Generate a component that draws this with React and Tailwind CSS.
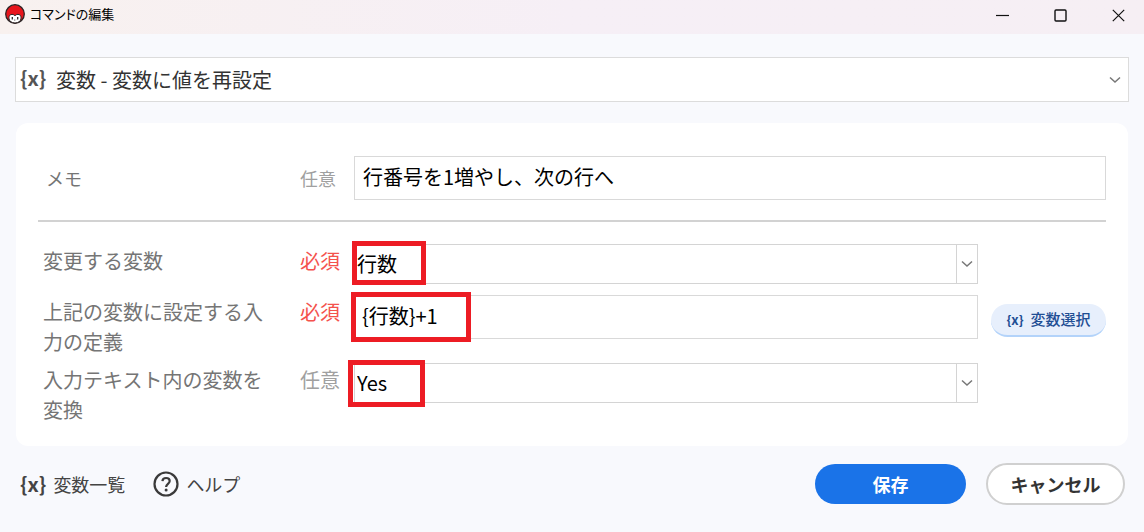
import React, { useState } from 'react';

const MascotIcon = () => (
    <svg viewBox="0 0 20 20" className="h-5 w-5 shrink-0" aria-hidden="true">
        <circle cx="10" cy="10" r="9.3" fill="#e8151c" stroke="#2b2526" strokeWidth="1.3" />
        <path d="M5 17.2C3.2 14 3.8 10.4 7 10.4c1.5 0 2.4.6 3 1.5.6-.9 1.5-1.5 3-1.5 3.2 0 3.8 3.6 2 6.8A9.2 9.2 0 0 1 10 19a9.2 9.2 0 0 1-5-1.8Z" fill="#fff" stroke="#2b2526" strokeWidth="1" />
        <path d="M7.3 13v2.6M12.7 13v2.6" fill="none" stroke="#2b2526" strokeWidth="1.3" />
        <path d="m9.4 15.8.6.6.6-.6" fill="none" stroke="#2b2526" strokeWidth=".9" />
    </svg>
);

const VariableMark = ({ className }) => (
    <span className={className}>{'{x}'}</span>
);

const Chevron = () => (
    <svg viewBox="0 0 12 8" className="h-2 w-3" fill="none" stroke="#777" strokeWidth="1.5" aria-hidden="true">
        <path d="M1 1.5 6 6l5-4.5" />
    </svg>
);

const WindowButton = ({ label, children }) => (
    <button type="button" aria-label={label} className="flex h-7 w-[46px] items-center justify-center">
        <svg viewBox="0 0 13 13" className="h-[13px] w-[13px]" fill="none" stroke="#111" strokeWidth="1.2" aria-hidden="true">
            {children}
        </svg>
    </button>
);

const TitleBar = () => (
    <header className="flex h-[34px] items-start justify-between bg-linear-to-r from-[#f8f1ef] via-[#f6eff6] to-[#f6eff4]">
        <div className="flex items-center gap-[5px] pt-1 pl-[5px]">
            <MascotIcon />
            <h1 className="text-[13px] leading-5 text-black [font-feature-settings:'palt']">コマンドの編集</h1>
        </div>
        <div className="flex gap-3 pt-px pr-[3px]">
            <WindowButton label="最小化"><path d="M0 6.5h13" /></WindowButton>
            <WindowButton label="最大化"><rect x="1" y="1" width="11" height="11" rx="1" strokeWidth="1.4" /></WindowButton>
            <WindowButton label="閉じる"><path d="m.8.8 11.4 11.4M12.2.8.8 12.2" /></WindowButton>
        </div>
    </header>
);

const Tag = ({ required }) => (
    <span className={`w-[54px] shrink-0 text-[20px] leading-[30px] ${required ? 'text-[#f4524d]' : 'text-[#a0a0a0]'}`}>
        {required ? '必須' : '任意'}
    </span>
);

const FieldRow = ({ id, label, required, aside, children }) => (
    <div className="flex items-start pl-[5px]">
        <label htmlFor={id} className="mr-[27px] w-[230px] shrink-0 pt-0.5 text-[20px] leading-[30px] text-[#757575]">{label}</label>
        <div className="flex pt-0.5"><Tag required={required} /></div>
        <div className="relative min-w-0 flex-1">{children}</div>
        <div className="w-32 shrink-0 pt-[9px] pl-[13px]">{aside}</div>
    </div>
);

const Dropdown = ({ id, value, options, onChange }) => (
    <>
        <select
            id={id}
            value={value}
            onChange={e => onChange(e.target.value)}
            className="block h-10 w-full appearance-none border border-[#d4d4d4] bg-white pl-0.5 text-[20px] text-black"
        >
            {options.map(option => <option key={option}>{option}</option>)}
        </select>
        <span className="pointer-events-none absolute inset-y-0 right-0 flex w-[22px] items-center justify-center border border-[#d4d4d4]">
            <Chevron />
        </span>
    </>
);

const Highlight = ({ className }) => (
    <span className={`pointer-events-none absolute border-[5px] border-[#ed1c24] ${className}`} />
);

const App = () => {
    const [command, setCommand] = useState('変数 - 変数に値を再設定');
    const [memo, setMemo] = useState('行番号を1増やし、次の行へ');
    const [variable, setVariable] = useState('行数');
    const [definition, setDefinition] = useState('{行数}+1');
    const [convert, setConvert] = useState('Yes');

    return (
        <div className="min-h-screen bg-[#f8f9fd] font-['Noto_Sans_CJK_JP',sans-serif]">
            <TitleBar />
            <main className="px-4 pt-[23px]">
                <div className="relative -mx-px">
                    <VariableMark className="pointer-events-none absolute top-[6px] left-[5px] text-[20px] leading-[30px] font-bold text-[#555]" />
                    <select
                        aria-label="コマンド"
                        value={command}
                        onChange={e => setCommand(e.target.value)}
                        className="block h-[45px] w-full appearance-none border border-[#dcdcdc] bg-white pl-10 text-[20px] text-[#333]"
                    >
                        <option>変数 - 変数に値を再設定</option>
                    </select>
                    <span className="pointer-events-none absolute inset-y-0 right-2 flex items-center"><Chevron /></span>
                </div>

                <section className="mt-[21px] rounded-xl bg-white px-[22px] pt-[33px] pb-[21px]">
                    <div className="flex items-center pl-2">
                        <label htmlFor="memo" className="w-[254px] shrink-0 text-[18px] text-[#757575]">メモ</label>
                        <span className="w-[54px] shrink-0 text-[18px] text-[#a0a0a0]">任意</span>
                        <input
                            id="memo"
                            value={memo}
                            onChange={e => setMemo(e.target.value)}
                            className="h-11 min-w-0 flex-1 border border-[#d9d9d9] px-2 pb-1 text-[20px] text-black"
                        />
                    </div>
                    <hr className="mt-5 mb-[22px] border-t-2 border-[#d2d2d2]" />

                    <FieldRow id="variable" label="変更する変数" required>
                        <Dropdown id="variable" value={variable} options={['行数']} onChange={setVariable} />
                        <Highlight className="-top-[3px] -left-0.5 h-11 w-[74px]" />
                    </FieldRow>
                    <div className="mt-[11px] mb-1.5">
                        <FieldRow
                            id="definition"
                            label="上記の変数に設定する入力の定義"
                            required
                            aside={(
                                <button type="button" className="flex h-[33px] w-[115px] items-center justify-center gap-[7px] rounded-full border-b-2 border-[#b3d3fa] bg-[#e7effc] text-[15px] font-medium text-[#1f4e94]">
                                    <VariableMark className="text-[13px] font-bold" />変数選択
                                </button>
                            )}
                        >
                            <input
                                id="definition"
                                value={definition}
                                onChange={e => setDefinition(e.target.value)}
                                className="block h-11 w-full border border-[#d9d9d9] px-[7px] pb-1 text-[20px] text-black"
                            />
                            <Highlight className="-top-[3px] -left-[3px] h-[50px] w-[120px]" />
                        </FieldRow>
                    </div>
                    <FieldRow id="convert" label="入力テキスト内の変数を変換">
                        <Dropdown id="convert" value={convert} options={['Yes', 'No']} onChange={setConvert} />
                        <Highlight className="-top-[3px] -left-1.5 h-[47px] w-[77px]" />
                    </FieldRow>
                </section>
            </main>

            <footer className="flex items-center justify-between pt-[17px] pr-[19px] pl-5 text-[18px] text-[#444]">
                <div className="flex items-center gap-7">
                    <button type="button" className="flex items-center gap-[7px]">
                        <VariableMark className="text-[20px] leading-[30px] font-bold" />変数一覧
                    </button>
                    <button type="button" className="flex items-center gap-[7px]">
                        <svg viewBox="0 0 26 26" className="h-[26px] w-[26px]" fill="none" stroke="#3a3a3a" strokeWidth="2.2" aria-hidden="true">
                            <circle cx="13" cy="13" r="11.5" />
                            <path d="M9.4 10.2c.2-2 1.7-3.2 3.7-3.2 2.1 0 3.6 1.3 3.6 3.1 0 2.8-3.6 2.9-3.6 5.9" />
                            <circle cx="13.1" cy="19" r="1.5" fill="#3a3a3a" stroke="none" />
                        </svg>
                        ヘルプ
                    </button>
                </div>
                <div className="flex items-center gap-5 font-bold">
                    <button type="button" className="h-10 w-[151px] rounded-full bg-[#1a73e8] text-white">保存</button>
                    <button type="button" className="h-[42px] w-[139px] rounded-full border-2 border-[#d0d0d0] bg-white text-[#333]">キャンセル</button>
                </div>
            </footer>
        </div>
    );
};

export default App;
